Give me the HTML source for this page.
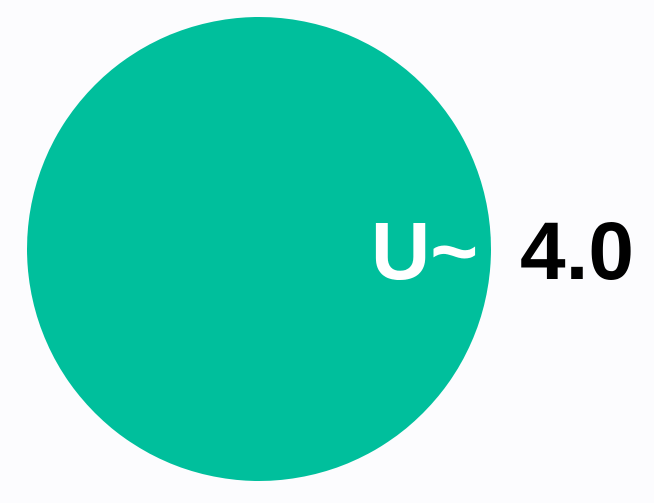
<!DOCTYPE html>
<html><head><style>
html,body{margin:0;padding:0;width:654px;height:503px;background:#fcfcfe;overflow:hidden;position:relative}
.c{position:absolute;left:27px;top:17px;width:464px;height:464px;border-radius:50%;background:#00bf9c}
.t{position:absolute;top:0;font-family:"Liberation Sans",sans-serif;font-weight:bold;font-size:82px;line-height:1;white-space:nowrap}
</style></head><body>
<div class="c"></div>
<div class="t" style="left:371px;top:211px;color:#fff">U~</div>
<div class="t" style="left:520px;top:211px;color:#000">4.0</div>
</body></html>
